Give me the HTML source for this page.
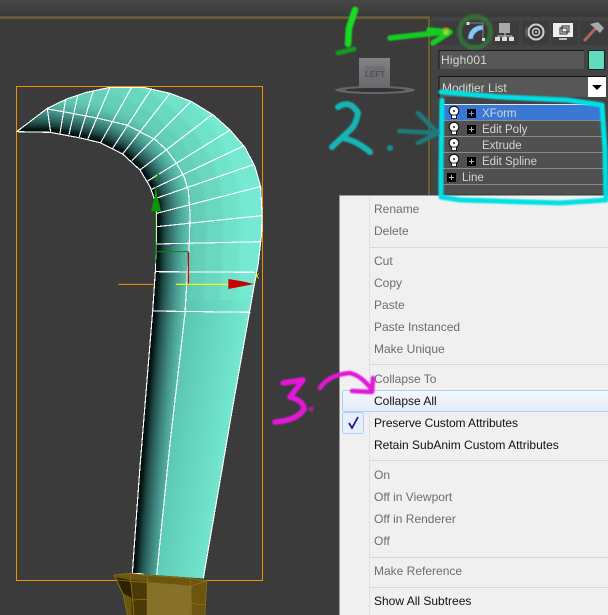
<!DOCTYPE html>
<html><head><meta charset="utf-8"><style>
html,body{margin:0;padding:0;background:#3b3b3b;width:608px;height:615px;overflow:hidden}
svg{display:block}
text{font-family:"Liberation Sans",sans-serif}
.m{font-size:12px;fill:#6d6d6d}
.k{font-size:12px;fill:#111}
.s{font-size:11.5px;fill:#d6d6d0}
</style></head><body>
<svg width="608" height="615" viewBox="0 0 608 615" xmlns="http://www.w3.org/2000/svg">
<defs>
<filter id="b1" x="-30%" y="-30%" width="160%" height="160%"><feGaussianBlur stdDeviation="0.9"/></filter>
<filter id="b3" filterUnits="userSpaceOnUse" x="-500" y="-300" width="2000" height="2400" color-interpolation-filters="sRGB"><feGaussianBlur stdDeviation="5"/></filter>
<linearGradient id="top" x1="0" y1="0" x2="0" y2="1"><stop offset="0" stop-color="#484848"/><stop offset="1" stop-color="#3a3a3a"/></linearGradient>
<linearGradient id="hl" x1="0" y1="0" x2="0" y2="1"><stop offset="0" stop-color="#f4f8fd"/><stop offset="1" stop-color="#e2ebf8"/></linearGradient>
<linearGradient id="cube" x1="0" y1="0" x2="0" y2="1"><stop offset="0" stop-color="#808285"/><stop offset="1" stop-color="#68696c"/></linearGradient>
<linearGradient id="low" gradientUnits="userSpaceOnUse" x1="570" y1="700" x2="753" y2="727"><stop offset="0" stop-color="#5cc8b3"/><stop offset="1" stop-color="#75e9d1"/></linearGradient>
<clipPath id="blade"><path d="M50 185L142 115L200 87L260 67L330 52L430 52L510 70L575 95L640 135L690 180L735 232L765 290L782 350L786 430L785 490L775 580L762 650L755 690L700 1000L610 1525L397 1510L420 1190L458 723L466 605L470 470L468 400L450 350L420 300L368 252L300 218L237 203L150 187Z"/></clipPath>
<path id="inner" fill="none" stroke-linejoin="round" d="M-20 185L50 185L150 187L237 203L300 218L368 252L420 300L450 350L468 400L470 470L466 605L458 723L420 1190L397 1510L390 1600"/>
<g id="bulb"><circle cx="0" cy="-1" r="4.8" fill="#fff" stroke="#000" stroke-width="1"/><rect x="-2.4" y="3" width="4.8" height="3.6" fill="#fff" stroke="#000" stroke-width=".8"/><circle cx="0" cy="-1" r="1" fill="#222"/></g>
</defs>

<rect width="608" height="615" fill="#3b3b3b"/>
<rect width="608" height="16" fill="url(#top)"/>
<rect x="0" y="16" width="430" height="1" fill="#555"/>
<rect x="0" y="17" width="430" height="2" fill="#6e5f28"/>
<rect x="428" y="17" width="2" height="200" fill="#6e5f28"/>
<rect x="431" y="17" width="177" height="200" fill="#434343"/>

<!-- view cube -->
<ellipse cx="375" cy="90" rx="40" ry="4" fill="#666"/>
<ellipse cx="375" cy="90" rx="30" ry="2" fill="#333"/>
<rect x="359" y="58" width="31" height="30" fill="url(#cube)"/>
<rect x="365" y="66" width="20" height="16" fill="#6f7073"/>
<text x="375" y="77" font-size="8" font-weight="bold" fill="#4f5053" text-anchor="middle">LEFT</text>

<!-- bounding box -->
<rect x="16.5" y="86.5" width="246" height="494" fill="none" stroke="#f09000" stroke-width="1"/>

<!-- blade -->
<g transform="translate(0,70) scale(.33333)">
<g clip-path="url(#blade)">
<rect x="0" y="0" width="840" height="1600" fill="#75e9d1"/>
<g filter="url(#b3)">
<use href="#inner" stroke="#70e2ca" stroke-width="500"/>
<use href="#inner" stroke="#6ad8c1" stroke-width="400"/>
<use href="#inner" stroke="#63cfb9" stroke-width="300"/>
<use href="#inner" stroke="#5ec7b2" stroke-width="220"/>
<use href="#inner" stroke="#58bcaa" stroke-width="190"/>
<use href="#inner" stroke="#52b0a0" stroke-width="170"/>
<use href="#inner" stroke="#4ba295" stroke-width="150"/>
<use href="#inner" stroke="#439188" stroke-width="130"/>
<use href="#inner" stroke="#3a7f78" stroke-width="110"/>
<use href="#inner" stroke="#306a65" stroke-width="90"/>
<use href="#inner" stroke="#255551" stroke-width="70"/>
<use href="#inner" stroke="#1a3f3c" stroke-width="50"/>
<use href="#inner" stroke="#0d2422" stroke-width="35"/>
<use href="#inner" stroke="#030f0e" stroke-width="22"/>
</g>
<path d="M559 690L555 730L510 1120L470 1515L610 1525L700 1000L755 690Z" fill="url(#low)"/>
</g>
<g fill="none" stroke="#fff" stroke-width="3.4" shape-rendering="crispEdges">
<path d="M50 185L142 115L200 87L260 67L330 52L430 52L510 70L575 95L640 135L690 180L735 232L765 290L782 350L786 430L785 490L775 580L762 650L755 690L700 1000L610 1525"/>
<path d="M50 185L150 187L237 203L300 218L368 252L420 300L450 350L468 400L470 470L466 605L458 723L420 1190L397 1510L430 1512"/>
<path d="M142 117L190 125L295 145L380 165L465 208L500 240L530 280L552 320L565 360L570 430L568 520L562 610L555 730L510 1120L470 1515"/>
<path d="M152 187L142 117M180 190L197 87M207 194L233 78M237 203L280 62M263 208L330 52M302 218L395 52M338 235L455 55M368 252L510 70M395 272L572 95M420 300L635 135M440 335L690 180M455 358L730 228M468 385L762 283M470 430L780 350M470 470L785 437M470 522L782 515M466 605L765 607M458 723L752 727"/>
</g>
<!-- gizmo -->
<path d="M355 643H462" stroke="#f09000" stroke-width="3" fill="none"/>
<path d="M467 350V580M467 545H565" stroke="#0a8a0a" stroke-width="3" fill="none"/>
<path d="M565 545V643" stroke="#d00000" stroke-width="4" fill="none"/>
<path d="M528 643H690" stroke="#ffff00" stroke-width="3.6" fill="none"/>
<path d="M685 627L722 633L762 642L722 650L685 657Z" fill="#c80000"/>
<path d="M468 350L472 380L478 400L483 425H453L458 400L464 380Z" fill="#0a960a"/>
<path d="M466 330L474 312L478 316L470 333Z" fill="none" stroke="#0a8a0a" stroke-width="2.5"/>
<path d="M766 610L776 626M776 610L766 626" stroke="#e8e800" stroke-width="2.5" fill="none"/>
</g>

<!-- handle -->
<g transform="translate(90,300) scale(.33333)">
<path d="M72 825L120 820L172 826L235 830L300 835L350 842L345 945H112L100 885L80 845Z" fill="#6b5510"/>
<path d="M172 848L305 858L302 945H172Z" fill="#86702a"/>
<path d="M122 838L170 846V945H125Z" fill="#4a3a08"/>
<path d="M78 832L120 840L128 895L100 880Z" fill="#2c2000"/>
<path d="M72 825L120 820L172 826L235 830L300 835L350 842L345 945M72 825L100 885L112 945M120 820L128 900L132 945M172 826V945M300 835L305 945M125 900L172 898L305 910L345 915M80 840L172 848L305 858L350 842" fill="none" stroke="#8b7410" stroke-width="2.5"/>
</g>

<!-- tabs -->
<g>
<rect x="433" y="21" width="27" height="24" rx="2" fill="#3c3c3c"/>
<rect x="462" y="21" width="28" height="24" rx="2" fill="#3a3a3a"/>
<rect x="492" y="21" width="27" height="24" rx="2" fill="#3c3c3c"/>
<rect x="522" y="21" width="27" height="24" rx="2" fill="#3c3c3c"/>
<rect x="551" y="21" width="27" height="24" rx="2" fill="#3c3c3c"/>
<rect x="580" y="21" width="28" height="24" rx="2" fill="#3c3c3c"/>
<circle cx="446" cy="32" r="5" fill="#c8502a"/>
<path d="M468 39C468 30 475 25 483 25V30C478 30 473 34 473 39Z" fill="#8fc4ee" stroke="#2a6db8" stroke-width=".8"/>
<path d="M468 23H483V39" fill="none" stroke="#9a9a9a" stroke-width=".8"/>
<rect x="466.5" y="22" width="3" height="3" fill="#ddd"/><rect x="482" y="38" width="3" height="3" fill="#ddd"/>
<rect x="499" y="23" width="11" height="10" fill="#a8a8a8"/>
<path d="M505 33V37M498 40V36H512V40" stroke="#ccc" fill="none"/>
<rect x="495" y="37" width="5" height="4" fill="#ddd"/><rect x="502" y="37" width="5" height="4" fill="#ddd"/><rect x="509" y="37" width="5" height="4" fill="#ddd"/>
<circle cx="536" cy="32" r="7.5" fill="#3c3c3c" stroke="#d0d0d0" stroke-width="2"/>
<circle cx="536" cy="32" r="3.5" fill="none" stroke="#d0d0d0" stroke-width="1.4"/>
<circle cx="536" cy="32" r="1" fill="#ddd"/>
<path d="M527 27Q525 32 527 37" stroke="#777" fill="none"/>
<rect x="553" y="23" width="20" height="14" fill="#eee"/>
<rect x="560" y="28" width="7" height="6" fill="none" stroke="#222"/><rect x="562" y="26" width="7" height="6" fill="none" stroke="#222"/>
<path d="M559 39H567" stroke="#bbb" stroke-width="2"/>
<path d="M584 41L597 27" stroke="#b0665a" stroke-width="3"/>
<path d="M590 24L598 22L604 28L600 33Z" fill="#a8a8a8"/>
</g>

<!-- name + colour -->
<rect x="439" y="50" width="145" height="19" fill="#575757"/>
<path d="M439 69V50.5H584" stroke="#1a1a1a" fill="none"/>
<text x="441" y="64" font-size="12" fill="#d8d8d0" letter-spacing=".2">High001</text>
<rect x="588.5" y="50.5" width="16" height="19" fill="#5edcbc" stroke="#222"/>

<!-- modifier list -->
<rect x="439" y="76" width="167" height="21" fill="#575757"/>
<path d="M439 97V76.5H606" stroke="#111" fill="none"/>
<text x="442" y="92" font-size="12" fill="#d8d8d0">Modifier List</text>
<rect x="588" y="77" width="18" height="20" fill="#fff"/>
<path d="M592 85H602L597 90Z" fill="#000"/>

<!-- stack -->
<rect x="440" y="104" width="164" height="90" fill="#505050"/>
<path d="M441 104.5H604M441 104.5V194" stroke="#e8e8e8" fill="none"/>
<rect x="441" y="105" width="163" height="15" fill="#3a78d6"/>
<path d="M441 120.5H604M441 136.5H604M441 152.5H604M441 168.5H604M441 184.5H604" stroke="#8a8a8a" fill="none"/>
<use href="#bulb" x="454" y="112"/>
<use href="#bulb" x="454" y="128"/>
<use href="#bulb" x="454" y="144"/>
<use href="#bulb" x="454" y="160"/>
<g fill="#000"><rect x="467" y="109" width="9" height="9"/><rect x="467" y="125" width="9" height="9"/><rect x="467" y="157" width="9" height="9"/><rect x="447" y="173" width="9" height="9"/></g>
<path d="M469 113.5H474M471.5 111V116" stroke="#5aa0ff"/>
<path d="M469 129.5H474M471.5 127V132M469 161.5H474M471.5 159V164M449 177.5H454M451.5 175V180" stroke="#bbb"/>
<text class="s" x="482" y="117">XForm</text>
<text class="s" x="482" y="133">Edit Poly</text>
<text class="s" x="482" y="149">Extrude</text>
<text class="s" x="482" y="165">Edit Spline</text>
<text class="s" x="462" y="181">Line</text>

<!-- context menu -->
<rect x="339.5" y="195.5" width="280" height="430" fill="#f0f0f0" stroke="#9a9a9a"/>
<rect x="369" y="197" width="1" height="418" fill="#e0e0e0"/>
<path d="M370 247.5H608M370 364.5H608M370 460.5H608M370 557.5H608M370 587.5H608" stroke="#d8d8d8" fill="none"/>
<rect x="342.5" y="390.5" width="270" height="21" rx="2" fill="url(#hl)" stroke="#aed0f5"/>
<rect x="342.5" y="412.5" width="21" height="21" rx="2" fill="#e6effb" stroke="#aed0f5"/>
<path d="M349 423L352 428L358 417" fill="none" stroke="#1a1a8a" stroke-width="1.8"/>
<text class="m" x="374" y="213">Rename</text>
<text class="m" x="374" y="235">Delete</text>
<text class="m" x="374" y="265">Cut</text>
<text class="m" x="374" y="287">Copy</text>
<text class="m" x="374" y="309">Paste</text>
<text class="m" x="374" y="331">Paste Instanced</text>
<text class="m" x="374" y="353">Make Unique</text>
<text class="m" x="374" y="383">Collapse To</text>
<text class="k" x="374" y="405">Collapse All</text>
<text class="k" x="374" y="427" textLength="144">Preserve Custom Attributes</text>
<text class="k" x="374" y="449">Retain SubAnim Custom Attributes</text>
<text class="m" x="374" y="479">On</text>
<text class="m" x="374" y="501">Off in Viewport</text>
<text class="m" x="374" y="523">Off in Renderer</text>
<text class="m" x="374" y="545">Off</text>
<text class="m" x="374" y="575">Make Reference</text>
<text class="k" x="374" y="605">Show All Subtrees</text>

<!-- annotations: green -->
<g fill="none" stroke-linecap="round" stroke-linejoin="round" filter="url(#b1)">
<circle cx="475" cy="32" r="15.5" stroke="#2f8a35" stroke-width="5" opacity=".6"/>
<path d="M355 10L349 28L348 44" stroke="#12dd22" stroke-width="6.5"/>
<path d="M338 53L354 49" stroke="#129a22" stroke-width="5"/>
<path d="M390 38L445 32M429 30L450 32L433 43" stroke="#12cc22" stroke-width="5.5"/>
<circle cx="446" cy="32" r="3" fill="#8add30" stroke="none"/>
</g>
<!-- cyan -->
<g fill="none" stroke-linecap="round" stroke-linejoin="round" filter="url(#b1)">
<path d="M441 92L500 97L567 100L602 105L605 150L606 200L560 203L460 200L441 197L441 170L442 100" stroke="#00e0e4" stroke-width="5"/>
<path d="M338 107Q350 99 358 113Q356 125 350 130L332 147M343 138Q357 141 370 152" stroke="#18b4b4" stroke-width="6"/>
<circle cx="390" cy="148" r="3" fill="#188c8c"/>
<path d="M399 131L438 133M418 113L438 133L418 143" stroke="#1d7a7c" stroke-width="4.5"/>
</g>
<!-- magenta -->
<g fill="none" stroke-linecap="round" stroke-linejoin="round" filter="url(#b1)">
<path d="M283 383L303 380L290 397Q304 401 304 409Q298 420 275 422" stroke="#e414d8" stroke-width="5.5"/>
<circle cx="311" cy="409" r="2.6" fill="#a020a0"/>
<path d="M320 388Q328 375 350 373Q362 376 372 390" stroke="#e414d8" stroke-width="4.5"/>
<path d="M352 391L372 392L373 378" stroke="#e414d8" stroke-width="4.5"/>
</g>
</svg>
</body></html>
